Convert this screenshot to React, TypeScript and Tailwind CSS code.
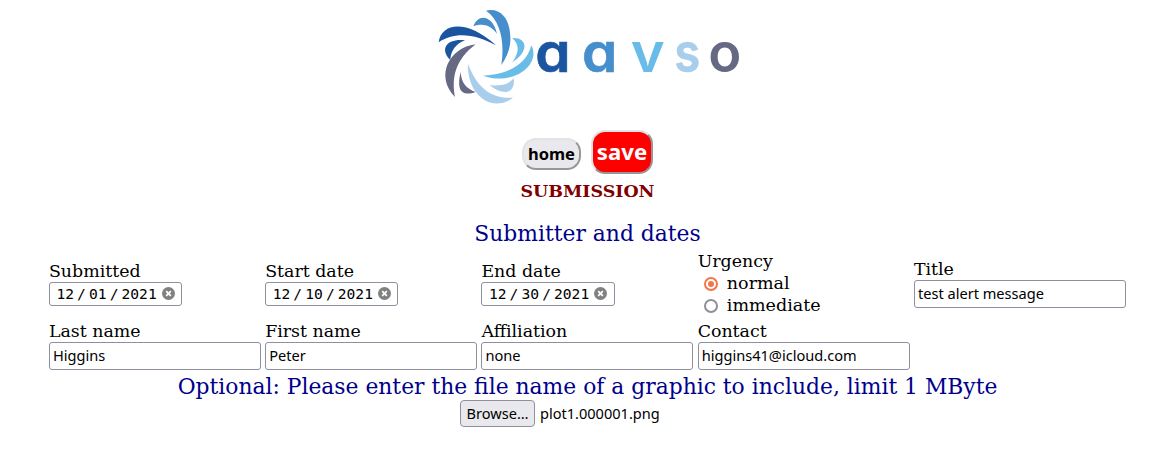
import type { ReactNode } from "react";

const serif = "font-['DejaVu_Serif',serif]";
const sans = "font-['Noto_Sans',sans-serif]";

function Logo() {
  return (
    <svg className="block h-[115px] w-[320px]" viewBox="0 0 960 345" role="img" aria-label="aavso">
      <path fill="#478ecc" d="M168 32C204 23 233 47 239 91C246 131 236 164 214 195C224 133 214 62 168 32Z" />
      <path fill="#478ecc" d="M130 79C143 41 187 42 201 101C181 76 161 69 130 79Z" />
      <path fill="#1c559f" d="M26 127C34 66 114 58 198 136C141 104 76 92 26 127Z" />
      <path fill="#1c559f" d="M105 121C58 114 24 142 61 180C62 153 77 132 105 121Z" />
      <path fill="#656984" d="M137 133C57 143 14 229 75 291C64 230 77 179 137 133Z" />
      <path fill="#656984" d="M92 216C80 265 90 292 137 276C110 266 94 251 92 216Z" />
      <path fill="#a9ceeb" d="M114 191C110 282 184 342 249 293C182 298 139 259 114 191Z" />
      <path fill="#a9ceeb" d="M179 256C218 257 235 253 251 235C257 280 220 289 179 256Z" />
      <path fill="#69bce8" d="M159 227C220 223 286 204 304 136C334 192 253 260 159 227Z" />
      <path fill="#69bce8" d="M247 114C290 111 301 152 247 187C268 157 269 135 247 114Z" />
      <g className="font-['Inter',sans-serif] text-[163px] font-semibold [font-feature-settings:'cv11'_1]">
        <text x="316" y="217" fill="#1c559f" stroke="#1c559f" strokeWidth="2" textLength="106" lengthAdjust="spacingAndGlyphs">a</text>
        <text x="456" y="217" fill="#478ecc" stroke="#478ecc" strokeWidth="2" textLength="106" lengthAdjust="spacingAndGlyphs">a</text>
        <text x="602" y="217" fill="#69bce8" textLength="102" lengthAdjust="spacingAndGlyphs">v</text>
        <text x="733" y="217" fill="#a9ceeb" stroke="#a9ceeb" strokeWidth="2" textLength="78" lengthAdjust="spacingAndGlyphs">s</text>
        <text x="835" y="217" fill="#656984">o</text>
      </g>
    </svg>
  );
}

function Field({ label, children }: { label: string; children: ReactNode }) {
  return (
    <div className="w-[212.25px]">
      <div className="-mt-px h-[21px] text-[17.4px] leading-5 whitespace-nowrap">{label}</div>
      {children}
    </div>
  );
}

function TextBox({ value }: { value?: string }) {
  return (
    <div className={`${sans} flex h-7 w-[212px] items-center rounded-[3px] border border-[#8f8f9d] px-[3px] pb-[2px] text-[14.6px] leading-5`}>
      {value}
    </div>
  );
}

function DateBox({ parts }: { parts: string[] }) {
  return (
    <div className="flex h-6 w-[133.2px] items-center rounded-[3px] border border-[#8f8f9d] pl-[6.5px] font-['DejaVu_Sans_Mono',monospace] text-[14.6px] leading-5">
      <span>{parts[0]}</span>
      <span className="w-[15px] text-center">/</span>
      <span>{parts[1]}</span>
      <span className="w-[15px] text-center">/</span>
      <span>{parts[2]}</span>
      <svg className="-mt-px ml-[5px] size-[13px] shrink-0" viewBox="0 0 13 13">
        <circle cx="6.5" cy="6.5" r="6.5" fill="#808080" />
        <path d="M4.2 4.2l4.6 4.6M8.8 4.2l-4.6 4.6" stroke="#fff" strokeWidth="1.8" />
      </svg>
    </div>
  );
}

function Radio({ label, checked }: { label: string; checked?: boolean }) {
  return (
    <div className="flex h-[22px] items-center pl-[6px] text-[17.5px] leading-[22px]">
      <span className={`mt-[2px] mr-[9.2px] flex size-[14px] items-center justify-center rounded-full border-2 ${checked ? "border-[#f4754a]" : "border-[#8f8f9d]"}`}>
        {checked && <span className="size-[6px] rounded-full bg-[#f4754a]" />}
      </span>
      {label}
    </div>
  );
}

export default function App() {
  return (
    <main className={`${serif} h-[453px] overflow-hidden bg-white text-black`}>
      <header className="flex flex-col items-center">
        <div className="pl-[6px]"><Logo /></div>
        <div className="mt-[15px] flex h-11 items-center gap-[10px]">
          <button className={`${sans} mt-[4px] h-8 w-[59px] rounded-[14px] border-2 border-t-[#e3e3e3] border-r-[#979797] border-b-[#979797] border-l-[#e3e3e3] bg-[#e9e9ed] pl-px text-[16.5px] leading-7 font-bold`}>home</button>
          <button className={`${sans} h-11 w-[62px] rounded-[14px] border-2 border-t-[#e3e3e3] border-r-[#979797] border-b-[#979797] border-l-[#e3e3e3] bg-[#ff0000] pl-px text-[22.2px] leading-[38px] font-bold text-white`}>save</button>
        </div>
        <h1 className="mt-[6px] pl-px text-[17.45px] leading-[22px] font-bold text-[#800000]">SUBMISSION</h1>
      </header>
      <h2 className="mt-[19px] pl-px text-center text-[21.83px] leading-[26px] text-[#00008b]">Submitter and dates</h2>
      <section className="-mt-px ml-[48.9px] grid grid-cols-[repeat(5,212.25px)] gap-x-[4px]">
        <div className="pt-[16px]"><Field label="Submitted"><DateBox parts={["12", "01", "2021"]} /></Field></div>
        <div className="pt-[16px]"><Field label="Start date"><DateBox parts={["12", "10", "2021"]} /></Field></div>
        <div className="pt-[16px]"><Field label="End date"><DateBox parts={["12", "30", "2021"]} /></Field></div>
        <div className="h-[76px] pt-[6px]">
          <Field label="Urgency">
            <Radio label="normal" checked />
            <Radio label="immediate" />
          </Field>
        </div>
        <div className="pt-[14px]"><Field label="Title"><TextBox value="test alert message" /></Field></div>
        <Field label="Last name"><TextBox value="Higgins" /></Field>
        <Field label="First name"><TextBox value="Peter" /></Field>
        <Field label="Affiliation"><TextBox value="none" /></Field>
        <Field label="Contact"><TextBox value="higgins41@icloud.com" /></Field>
      </section>
      <h2 className="mt-[4px] pl-px text-center text-[21.83px] leading-[26px] text-[#00008b]">Optional: Please enter the file name of a graphic to include, limit 1 MByte</h2>
      <div className={`${sans} ml-[460px] flex h-[27px] items-center gap-[5px] text-[14.55px] leading-5`}>
        <button className="h-[27px] w-[75px] rounded-[4px] border border-[#8f8f9d] bg-[#e9e9ed] pb-[2px]">Browse…</button>
        <span className="pb-[2px]">plot1.000001.png</span>
      </div>
    </main>
  );
}
